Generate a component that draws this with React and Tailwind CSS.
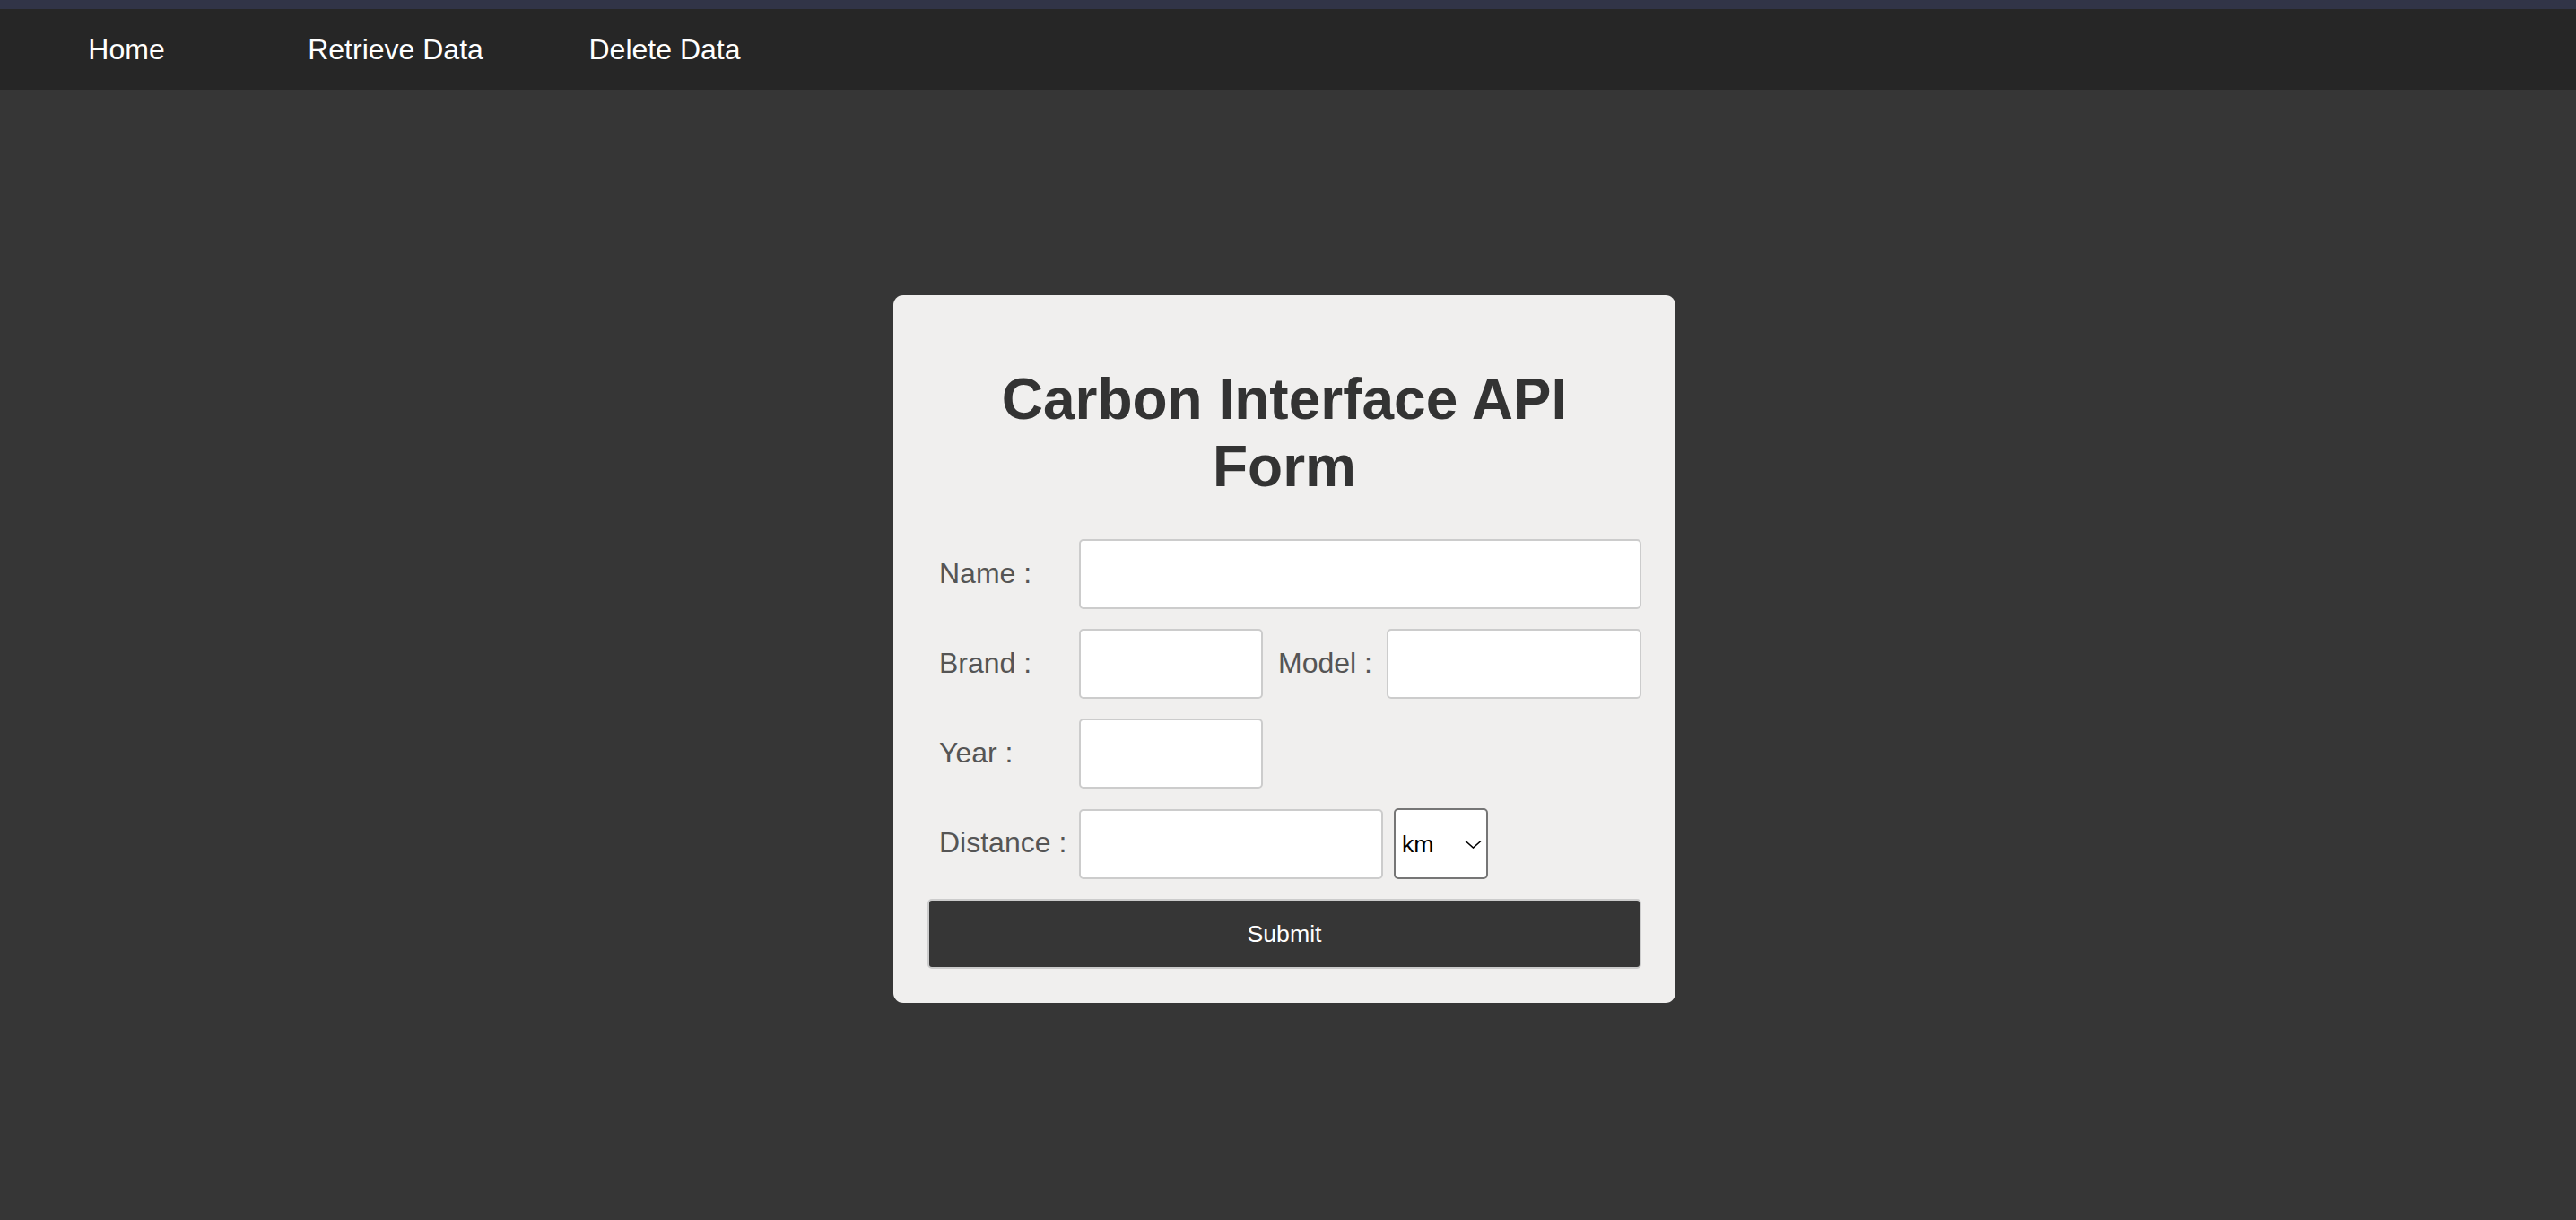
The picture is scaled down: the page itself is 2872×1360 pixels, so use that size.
const NAV = ['Home', 'Retrieve Data', 'Delete Data']

function Label({ children }) {
  return <label className="w-[169px] shrink-0 pb-[3px] pl-[13px] text-[32px] text-[#555]">{children}</label>
}

const inputCls = 'h-[78px] rounded-[5px] border-2 border-[#cccccc] bg-white outline-none'

export default function App() {
  return (
    <div className="min-h-screen bg-[#363636]" style={{ fontFamily: '"Liberation Sans", Arial, sans-serif' }}>
      <div className="h-[10px] bg-[#313447]" />
      <nav className="flex h-[90px] items-center gap-[100px] bg-[#262626] pl-[41px]">
        {NAV.map((label) => (
          <a key={label} className="w-[200px] text-center text-[32px] text-white">{label}</a>
        ))}
      </nav>

      <div className="flex justify-center pr-[8px] pt-[229px]">
        <form className="w-[872px] rounded-[11px] bg-[#f0efee] px-[38px] pb-[38px] pt-[38px]">
          <h1 className="mb-[43px] mt-[41px] text-center text-[64px] font-bold leading-[75px] text-[#333]">
            Carbon Interface API Form
          </h1>

          <div className="mb-[22px] flex items-center">
            <Label>Name :</Label>
            <input className={`${inputCls} flex-1`} />
          </div>

          <div className="mb-[22px] flex items-center">
            <Label>Brand :</Label>
            <input className={`${inputCls} w-[205px]`} />
            <span className="ml-[17px] mr-[16px] pb-[3px] text-[32px] text-[#555]">Model :</span>
            <input className={`${inputCls} min-w-0 flex-1`} />
          </div>

          <div className="mb-[22px] flex items-center">
            <Label>Year :</Label>
            <input className={`${inputCls} w-[205px]`} />
          </div>

          <div className="mb-[22px] flex items-center">
            <Label>Distance :</Label>
            <input className={`${inputCls} w-[339px]`} />
            <div className="relative ml-[12px]">
              <select className="h-[79px] w-[105px] appearance-none rounded-[5px] border-2 border-[#767676] bg-white pl-[7px] text-[26.67px] text-black outline-none">
                <option>km</option>
                <option>mi</option>
              </select>
              {/* chevron drawn over the select */}
              <svg width="19" height="10" viewBox="0 0 19 10" fill="none" className="pointer-events-none absolute right-[7px] top-[35px]">
                <path d="M1 1.5 L9.5 9 L18 1.5" stroke="#000" strokeWidth="1.6" />
              </svg>
            </div>
          </div>

          <button type="button" className="h-[78px] w-full rounded-[5px] border-2 border-[#cccccc] bg-[#363636] text-[26.67px] text-white">
            Submit
          </button>
        </form>
      </div>
    </div>
  )
}
